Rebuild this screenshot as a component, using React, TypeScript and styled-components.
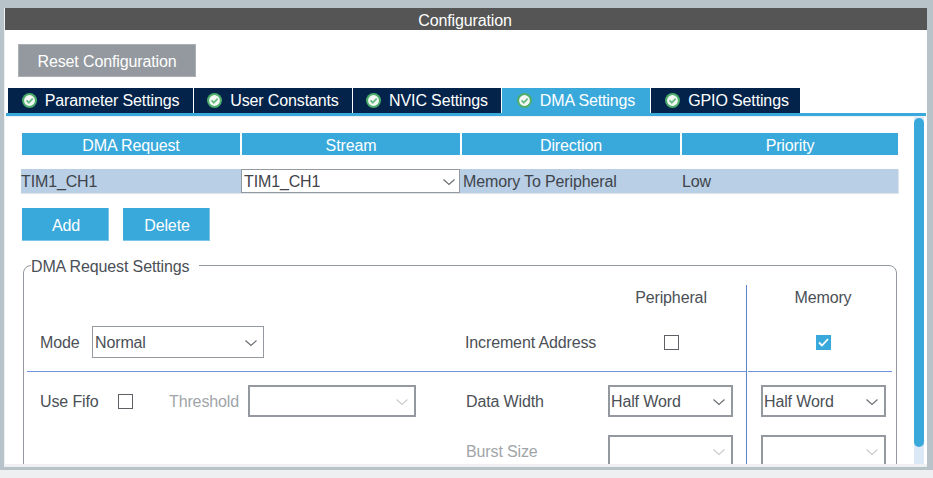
import React from "react";
import styled, { createGlobalStyle } from "styled-components";

const Global = createGlobalStyle`
  html, body { margin: 0; padding: 0; width: 933px; height: 478px; overflow: hidden; background: #eeeff0; }
  * { box-sizing: border-box; }
`;
const Page = styled.div`
  width: 933px; height: 478px; overflow: hidden; background: #eeeff0;
  font-family: "Liberation Sans", Arial, sans-serif; font-size: 16px; letter-spacing: -0.13px; color: #4b5056;
`;
const Frame = styled.div`
  height: 470px; background: #b8c3c9; padding: 8px 6px 3px 4px;
`;
const Panel = styled.div`
  height: 459px; background: #fff; border-left: 1px solid #eef0f1; display: flex; flex-direction: column; overflow: hidden;
`;
const Title = styled.div`
  height: 22px; background: #545554; color: #fff; text-align: center; line-height: 26px; flex: none; padding-right: 2px;
`;
const Reset = styled.div`
  margin: 14px 0 0 13px; width: 178px; height: 33px; flex: none; background: #93999e; border: 1px solid #aab0b4; padding-top: 2px;
  color: #fff; display: flex; align-items: center; justify-content: center;
`;
const Tabs = styled.div`
  margin: 11px 0 0 3px; display: flex; height: 25px; flex: none; gap: 1px;
`;
const Tab = styled.div<{ $w: number; $active?: boolean; $pl?: number }>`
  width: ${p => p.$w}px; height: ${p => (p.$active ? 28 : 25)}px; background: ${p => (p.$active ? "#39a9dc" : "#03234b")};
  color: #fff; display: flex; align-items: center; justify-content: center; gap: 8px; padding-bottom: ${p => (p.$active ? 3 : 0)}px;
  padding-left: ${p => p.$pl ?? 0}px;
  svg { flex: none; }
`;
const TabLine = styled.div`
  height: 3px; flex: none; margin-left: 1px; margin-right: 1px; background: #39a9dc;
`;
const Body = styled.div`
  flex: 1; min-height: 0; position: relative; overflow: hidden; border-top: 1px solid #eef0f1; border-bottom: 3px solid #eef0f1; padding: 16px 0 0 16px;
`;
const Head = styled.div`
  display: grid; grid-template-columns: 218px 218px 218px 216px; column-gap: 2px; margin-left: 1px; width: 876px;
`;
const HeadCell = styled.div`
  height: 22px; background: #39a9dc; color: #fff; text-align: center; line-height: 26px;
`;
const Row = styled.div`
  margin-top: 14px; width: 878px; height: 25px; background: #b8cfe6; border-bottom: 1px solid #e0e4e8; border-right: 1px solid #e0e4e8;
  display: grid; grid-template-columns: 220px 220px 220px 1fr; line-height: 26px; color: #3f444a;
`;
const RowText = styled.span<{ $pl?: number }>`
  padding-left: ${p => p.$pl ?? 0}px; white-space: nowrap;
`;
const RowSelect = styled.div`
  height: 24px; background: #fff; border: 1px solid #93999e; display: flex; align-items: center; justify-content: space-between; padding: 2px 3px 0 2px; margin-right: 1px;
`;
const Buttons = styled.div`
  margin: 14px 0 0 1px; display: flex; gap: 14px;
`;
const Btn = styled.div`
  width: 87px; height: 33px; background: #39a9dc; border: 1px solid #7ec6e8; border-width: 0 1px 1px 0; color: #fff;
  padding: 4px 0 0 2px; display: flex; align-items: center; justify-content: center;
`;
const Field = styled.fieldset`
  margin: 13px 0 0 2px; width: 874px; height: 260px; padding: 0 3px; border: 1px solid #93999e; border-radius: 8px; min-inline-size: 0;
`;
const Legend = styled.legend`
  margin-left: 4px; padding: 4px 10px 0 0; line-height: 18px; color: #4b5056;
`;
const Grid = styled.div`
  margin-top: 9px; display: grid; grid-template-columns: 720px 145px; grid-template-rows: 87px 100px;
`;
const LeftCell = styled.div<{ $bottom?: boolean }>`
  border-right: 1px solid #5f83c9;
  ${p => (p.$bottom ? "border-bottom: 1px solid #6f94de;" : "")}
`;
const MemoryTop = styled.div`
  margin-left: 1px; border-bottom: 1px solid #6f94de;
`;
const Line = styled.div<{ $top?: number; $left?: number }>`
  display: flex; align-items: center; height: 32px; margin-top: ${p => p.$top ?? 0}px; padding-left: ${p => p.$left ?? 0}px;
`;
const ColHead = styled.div<{ $w: number; $ml?: number }>`
  width: ${p => p.$w}px; margin-left: ${p => p.$ml ?? 0}px; text-align: center; height: 24px; line-height: 26px;
`;
const Label = styled.span<{ $w: number; $off?: boolean; $ml?: number }>`
  width: ${p => p.$w}px; margin-left: ${p => p.$ml ?? 0}px; padding-top: 2px; flex: none; white-space: nowrap; color: ${p => (p.$off ? "#a1a5a9" : "#4b5056")};
`;
const Sel = styled.div<{ $w: number; $thick?: boolean }>`
  width: ${p => p.$w}px; height: 32px; flex: none; border: ${p => (p.$thick ? 2 : 1)}px solid #93999e; background: #fff;
  display: flex; align-items: center; justify-content: space-between; padding: 2px 5px 0 ${p => (p.$thick ? 1 : 2)}px; color: #4b5056;
`;
const Box = styled.span<{ $on?: boolean; $ml?: number }>`
  width: 15px; height: 15px; flex: none; margin-left: ${p => p.$ml ?? 0}px; background: ${p => (p.$on ? "#39a9dc" : "#fff")};
  border: ${p => (p.$on ? "none" : "1px solid #5d6165")}; display: flex; align-items: center; justify-content: center;
`;
const Track = styled.div`
  position: absolute; right: 3px; top: 0; bottom: 0; width: 10px; background: #dbe9f6;
`;
const Thumb = styled.div`
  height: 329px; margin-top: 1px; background: #39a9dc; border-radius: 5px;
`;
const Chev = ({ off }: { off?: boolean }) => (
  <svg width="14" height="8" viewBox="0 0 14 8"><path d="M1.5 1.5 7 6.5 12.5 1.5" fill="none" stroke={off ? "#c9cccf" : "#6b7075"} strokeWidth="1.2" /></svg>
);
const Ok = () => (
  <svg width="15" height="15" viewBox="0 0 15 15">
    <circle cx="7.5" cy="7.5" r="7.5" fill="#4cae6a" /><circle cx="7.5" cy="7.5" r="5.4" fill="#f4f8f5" />
    <path d="M4.5 7.3 6.8 9.6 10.7 5.6" fill="none" stroke="#6bbd85" strokeWidth="1.9" />
  </svg>
);
const Tick = () => (
  <svg width="11" height="9" viewBox="0 0 11 9"><path d="M1 4.5 4 7.5 10 1" fill="none" stroke="#fff" strokeWidth="1.8" /></svg>
);

export default function App() {
  return (
    <Page>
      <Global />
      <Frame>
        <Panel>
          <Title>Configuration</Title>
          <Reset>Reset Configuration</Reset>
          <Tabs>
            <Tab $w={185}><Ok />Parameter Settings</Tab>
            <Tab $w={158}><Ok />User Constants</Tab>
            <Tab $w={148}><Ok />NVIC Settings</Tab>
            <Tab $w={148} $active><Ok />DMA Settings</Tab>
            <Tab $w={149} $pl={3}><Ok />GPIO Settings</Tab>
          </Tabs>
          <TabLine />
          <Body>
            <Head>
              <HeadCell>DMA Request</HeadCell>
              <HeadCell>Stream</HeadCell>
              <HeadCell>Direction</HeadCell>
              <HeadCell>Priority</HeadCell>
            </Head>
            <Row>
              <RowText>TIM1_CH1</RowText>
              <RowSelect>TIM1_CH1<Chev /></RowSelect>
              <RowText $pl={2}>Memory To Peripheral</RowText>
              <RowText $pl={1}>Low</RowText>
            </Row>
            <Buttons><Btn>Add</Btn><Btn>Delete</Btn></Buttons>
            <Field>
              <Legend>DMA Request Settings</Legend>
              <Grid>
                <LeftCell $bottom>
                  <ColHead $w={150} $ml={569}>Peripheral</ColHead>
                  <Line $top={17} $left={13}>
                    <Label $w={52}>Mode</Label>
                    <Sel $w={172}>Normal<Chev /></Sel>
                    <Label $w={199} $ml={201}>Increment Address</Label>
                    <Box />
                  </Line>
                </LeftCell>
                <MemoryTop>
                  <ColHead $w={150}>Memory</ColHead>
                  <Line $top={17} $left={68}>
                    <Box $on><Tick /></Box>
                  </Line>
                </MemoryTop>
                <LeftCell>
                  <Line $top={13} $left={13}>
                    <Label $w={78}>Use Fifo</Label>
                    <Box />
                    <Label $off $w={79} $ml={36}>Threshold</Label>
                    <Sel $w={168} $thick><span /><Chev off /></Sel>
                    <Label $w={142} $ml={50}>Data Width</Label>
                    <Sel $w={125} $thick>Half Word<Chev /></Sel>
                  </Line>
                  <Line $top={18} $left={439}>
                    <Label $off $w={142}>Burst Size</Label>
                    <Sel $w={125} $thick><span /><Chev off /></Sel>
                  </Line>
                </LeftCell>
                <div>
                  <Line $top={13} $left={14}>
                    <Sel $w={125} $thick>Half Word<Chev /></Sel>
                  </Line>
                  <Line $top={18} $left={14}>
                    <Sel $w={125} $thick><span /><Chev off /></Sel>
                  </Line>
                </div>
              </Grid>
            </Field>
            <Track><Thumb /></Track>
          </Body>
        </Panel>
      </Frame>
    </Page>
  );
}
